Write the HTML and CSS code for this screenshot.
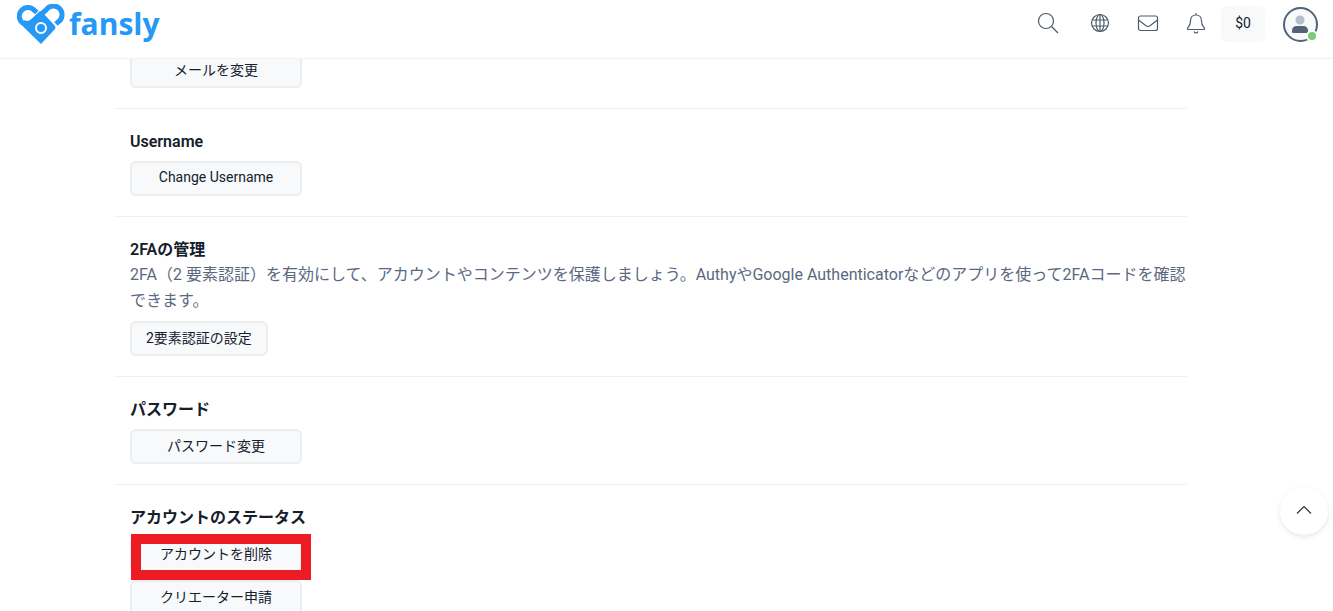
FILE: index.html
```html
<!DOCTYPE html>
<html lang="ja">
<head>
  <meta charset="UTF-8">
  <meta name="viewport" content="width=device-width, initial-scale=1">
  <title>Fansly</title>
  <link rel="stylesheet" href="styles.css">
</head>
<body>

  <header class="topbar">
    <a class="logo" href="#">
      <svg width="48" height="40" viewBox="0 0 48 40" aria-hidden="true">
        <path class="logo-line" d="M5.500 19A8.700 8.700 0 1 1 17.500 6.500L20 8.500"/>
        <path class="logo-fill" d="M3.500 20L8 16Q10 18 13 16L23 7L27 10L38 22Q39 24 38 25L24 40Z"/>
        <path class="logo-gap" d="M14 14.500L23 6"/>
        <path class="logo-line" d="M21 13L29 6A8.700 8.700 0 1 1 41 18L39 20"/>
        <circle class="logo-lens" cx="24" cy="24" r="5"/>
        <circle class="logo-dot" cx="23" cy="23" r="2"/>
      </svg>
      <span>fansly</span>
    </a>

    <nav class="actions">
      <button class="icon-btn search" aria-label="Search">
        <svg width="22" height="22" viewBox="0 0 22 22"><circle cx="9" cy="9" r="7.5"/><path d="M14.5 14.5L21 21"/></svg>
      </button>
      <button class="icon-btn" aria-label="Language">
        <svg width="20" height="20" viewBox="0 0 20 20"><circle cx="10" cy="10" r="8.5"/><ellipse cx="10" cy="10" rx="4" ry="8.5"/><path d="M2 7h16M2 13h16M10 1.5v17"/></svg>
      </button>
      <button class="icon-btn" aria-label="Messages">
        <svg width="22" height="22" viewBox="0 0 22 22"><rect x="1.5" y="4" width="19" height="14.5" rx="2"/><path d="M1.5 8L9 13.7Q11 15 13 13.7L20.5 8"/></svg>
      </button>
      <button class="icon-btn" aria-label="Notifications">
        <svg width="20" height="22" viewBox="0 0 20 22"><path d="M10 1v2M10 3C6.500 3 4.500 5.500 4.500 9C4.500 13 3.300 14 2 15.500C1 16.700 1.500 17.500 2.500 17.500H17.500C18.500 17.500 19 16.700 18 15.500C16.700 14 15.500 13 15.500 9C15.500 5.500 13.500 3 10 3ZM8 19.500Q8.500 21 10 21T12 19.500"/></svg>
      </button>
      <button class="balance">$0</button>
      <button class="avatar" aria-label="Account">
        <svg width="35" height="35" viewBox="0 0 35 35">
          <circle class="avatar-ring" cx="17.500" cy="17.500" r="16.500"/>
          <circle class="avatar-head" cx="17" cy="13" r="4.500"/>
          <path class="avatar-body" d="M9 24Q9 19 14 19H20Q25 19 25 24V25Q25 26 24 26H10Q9 26 9 25Z"/>
        </svg>
        <span class="online"></span>
      </button>
    </nav>
  </header>

  <main class="settings">
    <section>
      <button class="btn">メールを変更</button>
    </section>

    <section>
      <h2>Username</h2>
      <button class="btn">Change Username</button>
    </section>

    <section>
      <h2>2FAの管理</h2>
      <p>2FA（2 要素認証）を有効にして、アカウントやコンテンツを保護しましょう。AuthyやGoogle Authenticatorなどのアプリを使って2FAコードを確認できます。</p>
      <button class="btn btn-auto">2要素認証の設定</button>
    </section>

    <section>
      <h2>パスワード</h2>
      <button class="btn">パスワード変更</button>
    </section>

    <section>
      <h2>アカウントのステータス</h2>
      <div class="marked">
        <button class="btn">アカウントを削除</button>
        <span class="marker"></span>
      </div>
      <button class="btn">クリエーター申請</button>
    </section>
  </main>

  <button class="to-top" aria-label="Back to top">
    <svg width="16" height="10" viewBox="0 0 16 10"><path d="M1 8.500L8 1.500L15 8.500"/></svg>
  </button>

</body>
</html>
```
FILE: styles.css
```css
* {
  box-sizing: border-box;
}
body {
  margin: 0;
  height: 100vh;
  overflow: hidden;
  background: #fff;
  color: #14202b;
  font-family: Roboto, "Noto Sans CJK JP", sans-serif;
  font-size: 16px;
}
button {
  font-family: inherit;
  color: inherit;
  border: 0;
  padding: 0;
  background: none;
  cursor: pointer;
}
svg {
  display: block;
  fill: none;
}

/* top bar */
.topbar {
  position: fixed;
  top: 0;
  left: 0;
  right: 0;
  z-index: 10;
  display: flex;
  align-items: center;
  justify-content: space-between;
  padding: 0 15px 10px 17px;
  background: #fff;
  border-bottom: 1px solid #f0f1f2;
}
.logo {
  display: flex;
  align-items: center;
  gap: 4px;
  height: 48px;
  color: #2699f7;
  font-family: "Open Sans", sans-serif;
  font-size: 30px;
  font-weight: 700;
  line-height: 40px;
  text-decoration: none;
}
.logo-line {
  stroke: #2699f7;
  stroke-width: 5;
}
.logo-gap {
  stroke: #fff;
  stroke-width: 1;
}
.logo-fill,
.logo-dot {
  fill: #2699f7;
}
.logo-lens {
  fill: #2699f7;
  stroke: #fff;
  stroke-width: 2;
}
.actions {
  display: flex;
  align-items: center;
}
.icon-btn {
  display: flex;
  align-items: center;
  justify-content: center;
  width: 48px;
  height: 48px;
  padding-bottom: 2px;
}
.icon-btn svg {
  stroke: #4d5b6b;
  stroke-width: 1.2;
}
.search {
  margin-right: 4px;
}
.balance {
  width: 44px;
  height: 36px;
  margin: 0 18px 0 1px;
  padding-bottom: 2px;
  border-radius: 6px;
  background: #f7f9fb;
  font-size: 14px;
}
.avatar {
  position: relative;
}
.avatar-ring {
  fill: #f7f9fb;
  stroke: #526377;
  stroke-width: 2;
}
.avatar-head {
  fill: #b5bfc9;
}
.avatar-body {
  fill: #526377;
}
.online {
  position: absolute;
  right: 0;
  bottom: 0;
  width: 12px;
  height: 12px;
  border: 2px solid #fff;
  border-radius: 50%;
  background: #77cc77;
}

/* settings list */
.settings {
  padding: 53px 146px 0 114px;
}
section {
  padding: 20px 0 20px 16px;
  border-bottom: 1px solid #f0f1f2;
}
section:first-child {
  padding-top: 0;
}
section:last-child {
  border-bottom: 0;
}
h2 {
  margin: 0 0 7px;
  font-size: 16px;
  font-weight: 600;
  line-height: 25px;
}
h2:has(+ p) {
  margin-bottom: 0;
}
p {
  margin: 0 -8px 7px 0;
  color: #5b6980;
  line-height: 26px;
}
.btn {
  display: block;
  min-width: 172px;
  height: 35px;
  padding: 0 14px 4px;
  border: 2px solid #ebedef;
  border-radius: 6px;
  background: #f7f9fb;
  font-size: 14px;
}
.btn-auto {
  min-width: 0;
}
.marked {
  position: relative;
  width: 172px;
  margin-bottom: 8px;
}
.marker {
  position: absolute;
  top: -3px;
  left: 1px;
  width: 180px;
  height: 46px;
  border: 10px solid #ed1c24;
  pointer-events: none;
}

.to-top {
  position: fixed;
  right: 5px;
  bottom: 76px;
  display: flex;
  align-items: center;
  justify-content: center;
  width: 48px;
  height: 48px;
  padding-bottom: 2px;
  border-radius: 50%;
  background: #fff;
  box-shadow: 0 2px 5px rgba(0, 0, 0, 0.1);
}
.to-top svg {
  stroke: #333;
  stroke-width: 1.2;
}
```
